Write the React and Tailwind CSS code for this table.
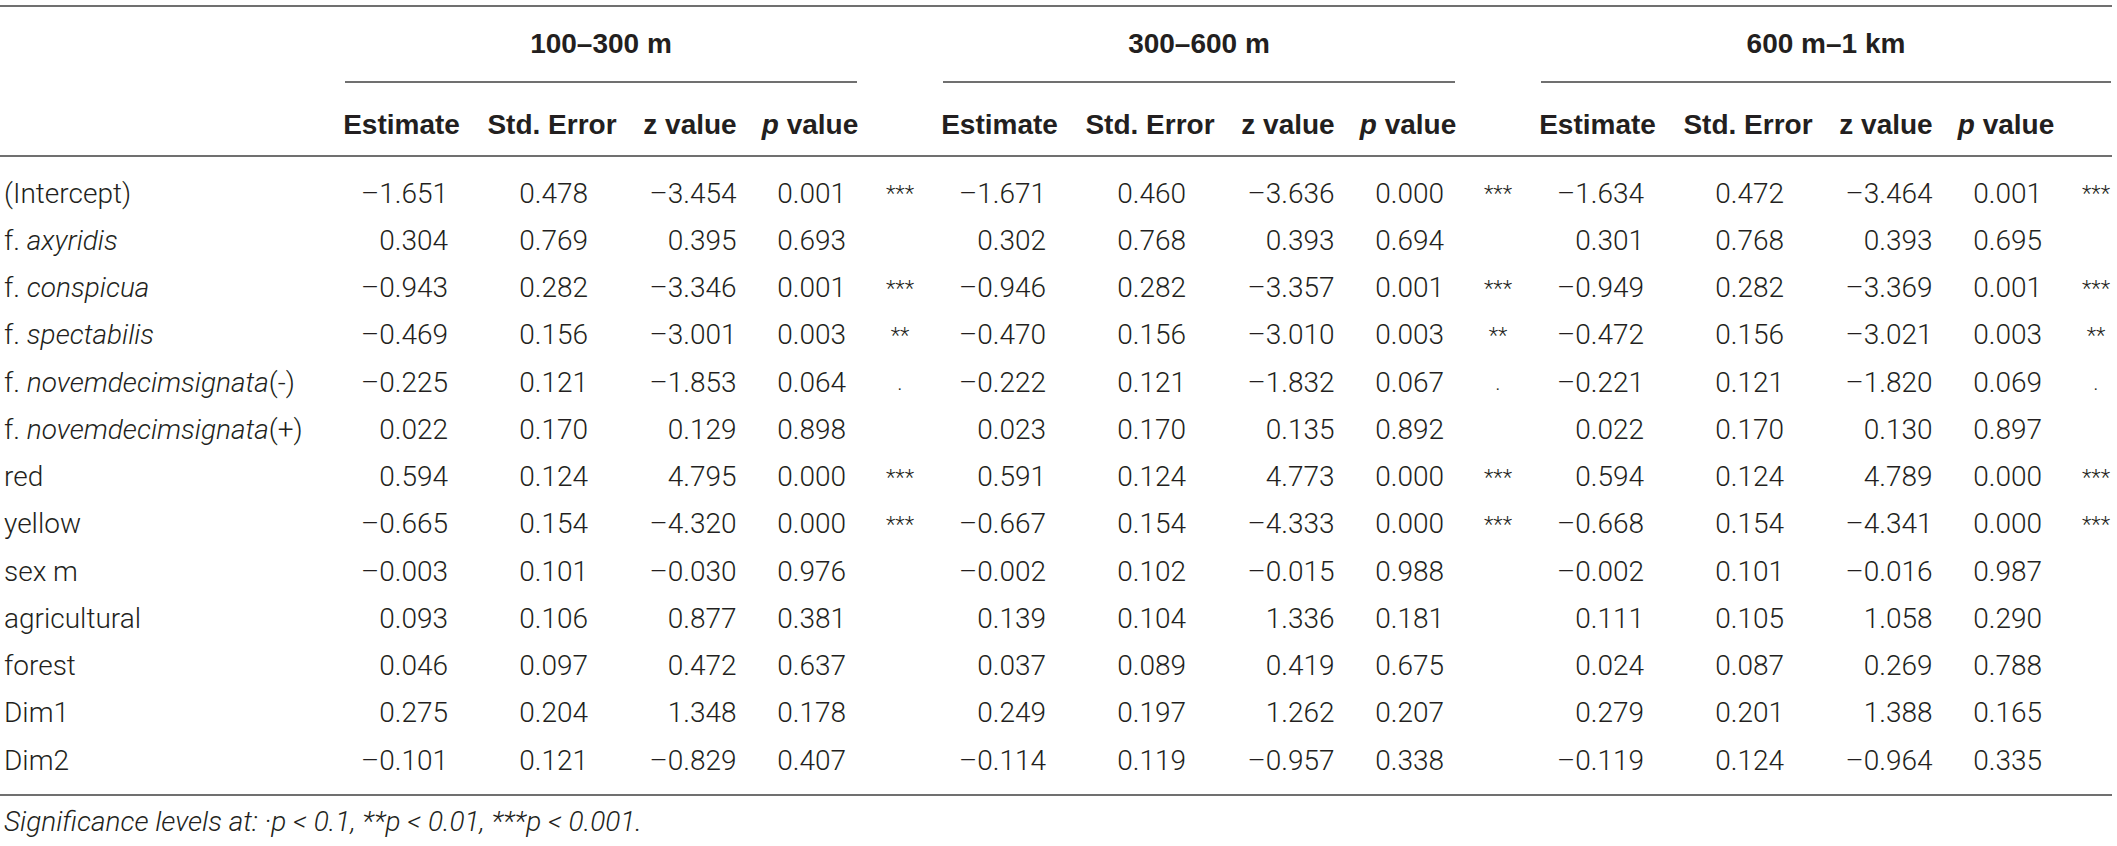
import React from 'react';

const rows = [
  { label: '(Intercept)', g: [
    ['–1.651', '0.478', '–3.454', '0.001', '***'],
    ['–1.671', '0.460', '–3.636', '0.000', '***'],
    ['–1.634', '0.472', '–3.464', '0.001', '***'] ] },
  { label: ['f. ', 'axyridis', ''], g: [
    ['0.304', '0.769', '0.395', '0.693', ''],
    ['0.302', '0.768', '0.393', '0.694', ''],
    ['0.301', '0.768', '0.393', '0.695', ''] ] },
  { label: ['f. ', 'conspicua', ''], g: [
    ['–0.943', '0.282', '–3.346', '0.001', '***'],
    ['–0.946', '0.282', '–3.357', '0.001', '***'],
    ['–0.949', '0.282', '–3.369', '0.001', '***'] ] },
  { label: ['f. ', 'spectabilis', ''], g: [
    ['–0.469', '0.156', '–3.001', '0.003', '**'],
    ['–0.470', '0.156', '–3.010', '0.003', '**'],
    ['–0.472', '0.156', '–3.021', '0.003', '**'] ] },
  { label: ['f. ', 'novemdecimsignata', '(-)'], g: [
    ['–0.225', '0.121', '–1.853', '0.064', '.'],
    ['–0.222', '0.121', '–1.832', '0.067', '.'],
    ['–0.221', '0.121', '–1.820', '0.069', '.'] ] },
  { label: ['f. ', 'novemdecimsignata', '(+)'], g: [
    ['0.022', '0.170', '0.129', '0.898', ''],
    ['0.023', '0.170', '0.135', '0.892', ''],
    ['0.022', '0.170', '0.130', '0.897', ''] ] },
  { label: 'red', g: [
    ['0.594', '0.124', '4.795', '0.000', '***'],
    ['0.591', '0.124', '4.773', '0.000', '***'],
    ['0.594', '0.124', '4.789', '0.000', '***'] ] },
  { label: 'yellow', g: [
    ['–0.665', '0.154', '–4.320', '0.000', '***'],
    ['–0.667', '0.154', '–4.333', '0.000', '***'],
    ['–0.668', '0.154', '–4.341', '0.000', '***'] ] },
  { label: 'sex m', g: [
    ['–0.003', '0.101', '–0.030', '0.976', ''],
    ['–0.002', '0.102', '–0.015', '0.988', ''],
    ['–0.002', '0.101', '–0.016', '0.987', ''] ] },
  { label: 'agricultural', g: [
    ['0.093', '0.106', '0.877', '0.381', ''],
    ['0.139', '0.104', '1.336', '0.181', ''],
    ['0.111', '0.105', '1.058', '0.290', ''] ] },
  { label: 'forest', g: [
    ['0.046', '0.097', '0.472', '0.637', ''],
    ['0.037', '0.089', '0.419', '0.675', ''],
    ['0.024', '0.087', '0.269', '0.788', ''] ] },
  { label: 'Dim1', g: [
    ['0.275', '0.204', '1.348', '0.178', ''],
    ['0.249', '0.197', '1.262', '0.207', ''],
    ['0.279', '0.201', '1.388', '0.165', ''] ] },
  { label: 'Dim2', g: [
    ['–0.101', '0.121', '–0.829', '0.407', ''],
    ['–0.114', '0.119', '–0.957', '0.338', ''],
    ['–0.119', '0.124', '–0.964', '0.335', ''] ] },
];

const groups = ['100–300 m', '300–600 m', '600 m–1 km'];

// 326 label | per group: est 151, se 150, z 126, p 114, stars 57 (last 49)
const gridCols =
  'grid grid-cols-[326px_151px_150px_126px_114px_57px_151px_150px_126px_114px_57px_151px_150px_126px_114px_49px]';

function Label({ label }) {
  if (typeof label === 'string') return <span>{label}</span>;
  return (
    <span>
      {label[0]}
      <i>{label[1]}</i>
      {label[2]}
    </span>
  );
}

function Num({ v, wide }) {
  return (
    <div className="text-center">
      <span className={`inline-block text-right ${wide ? 'w-[93px]' : 'w-[72px]'}`}>{v}</span>
    </div>
  );
}

function HeadCells() {
  const head = "font-['Liberation_Sans',Arial,sans-serif] font-bold text-center";
  return (
    <>
      <div className={head}>Estimate</div>
      <div className={head}>Std. Error</div>
      <div className={head}>z value</div>
      <div className={head}>
        <i>p</i> value
      </div>
    </>
  );
}

export default function App() {
  return (
    <div className="w-[2112px] bg-white pt-[5px] text-[28px] text-[#231f20] font-['Roboto','Liberation_Sans',sans-serif] font-light">
      <div className="border-t-2 border-[#707070]" />

      {/* group headers */}
      <div className="grid grid-cols-[326px_541px_57px_541px_57px_590px]">
        <div />
        {groups.map((g, i) => (
          <React.Fragment key={g}>
            <div
              className={`h-[76px] flex items-center justify-center border-b-2 border-[#707070] ml-[19px] font-['Liberation_Sans',Arial,sans-serif] font-bold ${
                i === 2 ? 'mr-[1px]' : 'mr-[10px]'
              }`}
            >
              {g}
            </div>
            {i < 2 && <div />}
          </React.Fragment>
        ))}
      </div>

      {/* column headers */}
      <div className={`${gridCols} h-[74px] items-center pt-[12px] border-b-2 border-[#707070]`}>
        <div />
        <HeadCells />
        <div />
        <HeadCells />
        <div />
        <HeadCells />
        <div />
      </div>

      {/* body */}
      <div className="pt-[13px] pb-[10px] border-b-2 border-[#707070]">
        {rows.map((r, ri) => (
          <div key={ri} className={`${gridCols} h-[47.25px] items-center`}>
            <div className="pl-[4px] whitespace-nowrap">
              <Label label={r.label} />
            </div>
            {r.g.map((c, gi) => (
              <React.Fragment key={gi}>
                <Num v={c[0]} wide />
                <Num v={c[1]} />
                <Num v={c[2]} wide />
                <Num v={c[3]} />
                <div className={`text-[22px] text-center ${gi === 2 ? 'pl-[17px]' : 'pl-[9px]'}`}>{c[4]}</div>
              </React.Fragment>
            ))}
          </div>
        ))}
      </div>

      <div className="pt-[10px] pl-[4px] leading-[32px] italic">
        Significance levels at: ·p &lt; 0.1, **p &lt; 0.01, ***p &lt; 0.001.
      </div>
    </div>
  );
}
